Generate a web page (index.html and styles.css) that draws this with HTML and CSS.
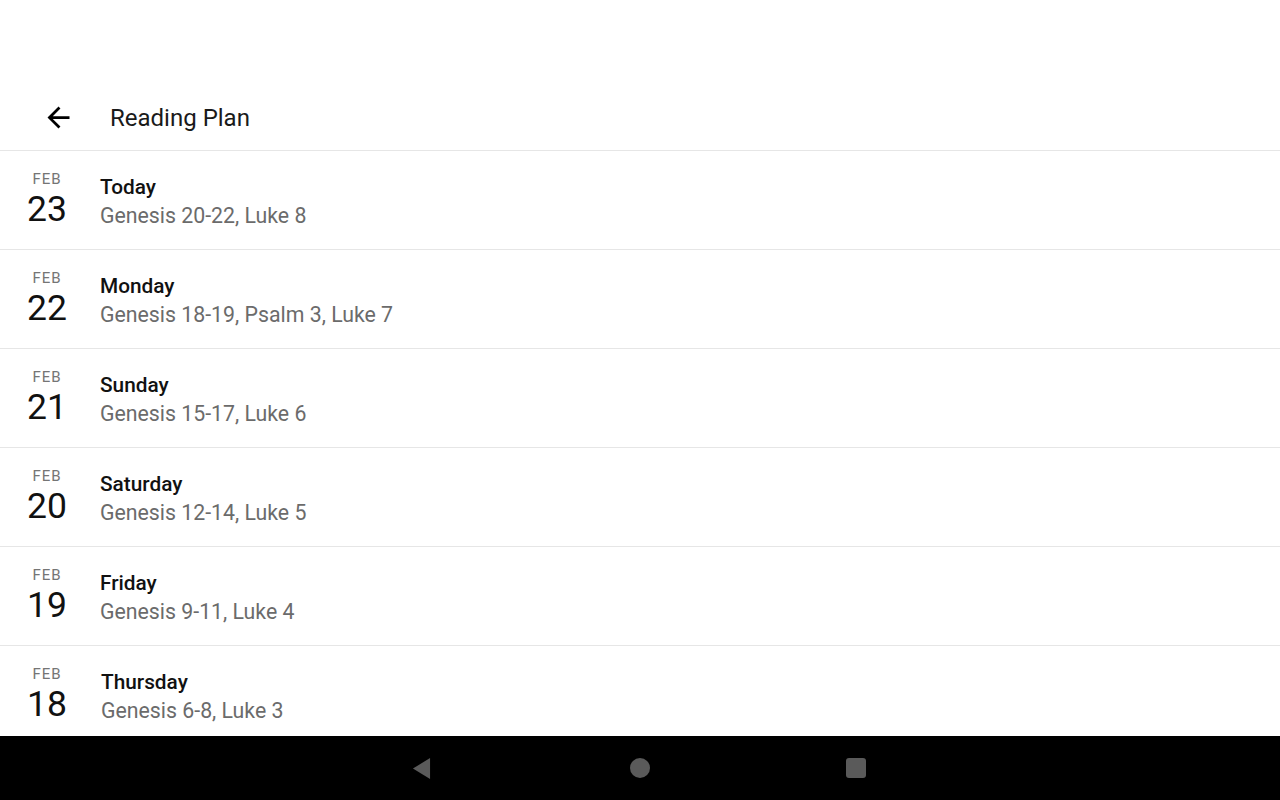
FILE: index.html
```html
<html>
  <head>
    <title>Reading Plan</title>
    <link rel="stylesheet" href="styles.css">
  </head>
  <body>
    <div class="screen">
      <div class="status"></div>

      <div class="toolbar">
        <svg class="back" viewBox="0 0 24 24"><path d="M20 11H7.83l5.59-5.59L12 4l-8 8 8 8 1.41-1.41L7.83 13H20v-2z"/></svg>
        <span class="title">Reading Plan</span>
      </div>

      <div class="list">
        <div class="row">
          <div class="date"><span class="month">FEB</span><span class="day">23</span></div>
          <div class="info"><span class="name">Today</span><span class="refs">Genesis 20-22, Luke 8</span></div>
        </div>
        <div class="row">
          <div class="date"><span class="month">FEB</span><span class="day">22</span></div>
          <div class="info"><span class="name">Monday</span><span class="refs">Genesis 18-19, Psalm 3, Luke 7</span></div>
        </div>
        <div class="row">
          <div class="date"><span class="month">FEB</span><span class="day">21</span></div>
          <div class="info"><span class="name">Sunday</span><span class="refs">Genesis 15-17, Luke 6</span></div>
        </div>
        <div class="row">
          <div class="date"><span class="month">FEB</span><span class="day">20</span></div>
          <div class="info"><span class="name">Saturday</span><span class="refs">Genesis 12-14, Luke 5</span></div>
        </div>
        <div class="row">
          <div class="date"><span class="month">FEB</span><span class="day">19</span></div>
          <div class="info"><span class="name">Friday</span><span class="refs">Genesis 9-11, Luke 4</span></div>
        </div>
        <div class="row last">
          <div class="date"><span class="month">FEB</span><span class="day">18</span></div>
          <div class="info"><span class="name">Thursday</span><span class="refs">Genesis 6-8, Luke 3</span></div>
        </div>
      </div>

      <div class="navbar">
        <svg class="nav-back" viewBox="0 0 20 24"><path d="M19 1 L1 12 L19 23 Z"/></svg>
        <span class="nav-home"></span>
        <span class="nav-recent"></span>
      </div>
    </div>
  </body>
</html>
```

FILE: styles.css
```css
body {
    margin: 0;
    padding: 0;
    background: #ffffff;
    font-family: Roboto, "Liberation Sans", sans-serif;
}

.screen {
    width: 1280px;
    height: 800px;
    display: flex;
    flex-direction: column;
    overflow: hidden;
}

.status {
    height: 86px;
    flex: none;
}

.toolbar {
    height: 64px;
    flex: none;
    display: flex;
    align-items: center;
    border-bottom: 1px solid #e6e6e6;
}

.back {
    width: 33px;
    height: 33px;
    margin-left: 42px;
    margin-right: 35px;
    margin-top: -1px;
    fill: #000000;
}

.title {
    font-size: 24px;
    color: #1a1a1a;
}

.list {
    flex: 1;
    overflow: hidden;
}

.row {
    height: 98px;
    display: flex;
    align-items: center;
    border-bottom: 1px solid #e6e6e6;
}

.row.last {
    border-bottom: none;
}

.date {
    width: 94px;
    display: flex;
    flex-direction: column;
    align-items: center;
}

.month {
    font-size: 15px;
    letter-spacing: 1px;
    color: #757575;
    line-height: 18px;
    margin-top: -1px;
}

.day {
    font-size: 35.5px;
    color: #111111;
    line-height: 40px;
    margin-top: 1px;
}

.info {
    display: flex;
    flex-direction: column;
    margin-left: 6px;
    margin-top: 3px;
}

.last .info {
    margin-left: 7px;
}

.name {
    font-size: 20.8px;
    font-weight: 500;
    color: #111111;
    line-height: 28px;
}

.refs {
    font-size: 21.3px;
    color: #6b6b6b;
    line-height: 29px;
}

.navbar {
    height: 64px;
    flex: none;
    background: #000000;
    display: flex;
    align-items: center;
    justify-content: center;
}

.nav-back {
    width: 19px;
    height: 23px;
    fill: #5a5a5a;
    margin-right: 199px;
    margin-left: -3px;
}

.nav-home {
    width: 20px;
    height: 20px;
    border-radius: 50%;
    background: #5a5a5a;
    margin-right: 196px;
}

.nav-recent {
    width: 20px;
    height: 20px;
    border-radius: 3px;
    background: #5a5a5a;
}
```
